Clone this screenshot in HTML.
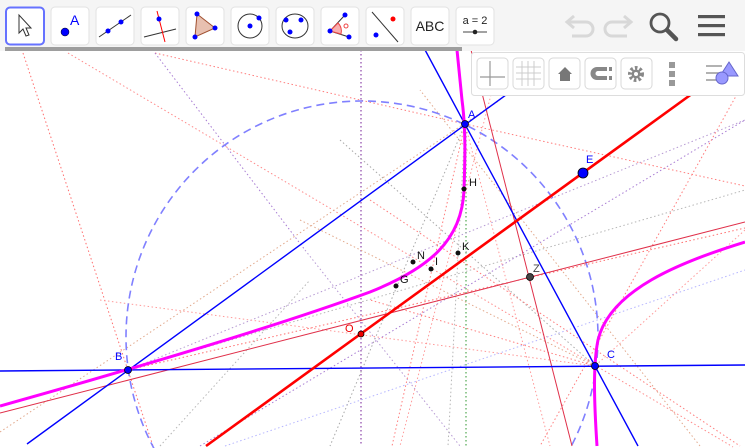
<!DOCTYPE html>
<html><head><meta charset="utf-8"><style>
html,body{margin:0;padding:0;width:745px;height:448px;overflow:hidden;background:#fff;font-family:"Liberation Sans",sans-serif}
#w{width:745px;height:448px;overflow:hidden;position:relative}
svg{display:block;position:absolute;left:0;top:0}
</style></head><body><div id="w">
<svg width="745" height="448" viewBox="0 0 745 448" overflow="hidden" xmlns="http://www.w3.org/2000/svg" font-family="Liberation Sans, sans-serif">
<rect width="745" height="448" fill="#fff"/>
<g fill="none" stroke-width="1" stroke-dasharray="1.5,2.5" opacity="0.85">
<line x1="23" y1="53" x2="153" y2="446" stroke="#f55"/>
<line x1="68" y1="53" x2="733" y2="447" stroke="#f77"/>
<line x1="155" y1="53" x2="465" y2="124" stroke="#f66"/>
<line x1="465" y1="124" x2="745" y2="186" stroke="#f66"/>
<line x1="155" y1="53" x2="305" y2="250" stroke="#96c"/>
<line x1="305" y1="250" x2="460" y2="446" stroke="#a8c"/>
<line x1="361" y1="50" x2="361" y2="446" stroke="#729" stroke-width="1.2"/>
<line x1="466" y1="124" x2="466" y2="446" stroke="#393" stroke-width="1.2"/>
<line x1="0" y1="432" x2="500" y2="100" stroke="#d97"/>
<line x1="128" y1="370" x2="745" y2="228" stroke="#f55"/>
<line x1="128" y1="370" x2="745" y2="120" stroke="#a8c"/>
<line x1="128" y1="370" x2="745" y2="190" stroke="#aaa"/>
<line x1="100" y1="300" x2="595" y2="366" stroke="#f88"/>
<line x1="200" y1="446" x2="745" y2="120" stroke="#96c"/>
<line x1="225" y1="446" x2="745" y2="270" stroke="#aaf"/>
<line x1="465" y1="124" x2="392" y2="446" stroke="#f66"/>
<line x1="465" y1="124" x2="448" y2="446" stroke="#aaa"/>
<line x1="465" y1="124" x2="330" y2="446" stroke="#999"/>
<line x1="465" y1="124" x2="550" y2="446" stroke="#f88"/>
<line x1="340" y1="140" x2="595" y2="366" stroke="#999"/>
<line x1="370" y1="200" x2="740" y2="446" stroke="#f66"/>
<line x1="300" y1="220" x2="595" y2="366" stroke="#d97"/>
<line x1="745" y1="80" x2="540" y2="446" stroke="#f66"/>
<line x1="700" y1="446" x2="420" y2="90" stroke="#d97"/>
<line x1="595" y1="366" x2="370" y2="300" stroke="#f66"/>
<line x1="160" y1="446" x2="310" y2="280" stroke="#aaa"/>
<line x1="500" y1="60" x2="400" y2="446" stroke="#f88"/>
<line x1="745" y1="230" x2="595" y2="366" stroke="#f88"/>
</g>
<circle cx="362" cy="337" r="236" fill="none" stroke="#8080ff" stroke-width="1.6" stroke-dasharray="8,5"/>
<line x1="0" y1="413" x2="745" y2="222" stroke="#e0304a" stroke-width="1"/>
<line x1="471" y1="50" x2="572" y2="446" stroke="#e0304a" stroke-width="1"/>
<g stroke="#0000ff" stroke-width="1.4">
<line x1="27" y1="444" x2="510" y2="92"/>
<line x1="424" y1="48" x2="638" y2="446"/>
<line x1="0" y1="371" x2="745" y2="365"/>
</g>
<line x1="206" y1="446" x2="700" y2="88" stroke="#f00" stroke-width="2.6"/>
<g fill="none" stroke="#ff00ff" stroke-width="3">
<path d="M0,406 Q250,336 370,292 C430,268 462,240 464,190 C465,160 466,130 462,100 L457,50"/>
<path d="M745,242 C680,262 610,290 598,340 C593,365 594,400 597,446"/>
</g>
<g stroke="#000" stroke-width="0.8">
<circle cx="465" cy="124" r="3.5" fill="#00f"/>
<circle cx="128" cy="370" r="3.5" fill="#00f"/>
<circle cx="595" cy="366" r="3.5" fill="#00f"/>
<circle cx="583" cy="173" r="5" fill="#00f"/>
<circle cx="361" cy="334" r="3" fill="#e00"/>
<circle cx="530" cy="277" r="3.5" fill="#444"/>
</g>
<g fill="#111">
<circle cx="464" cy="189" r="2.5"/><circle cx="458" cy="253" r="2.5"/>
<circle cx="413" cy="262" r="2.5"/><circle cx="431" cy="269" r="2.5"/>
<circle cx="396" cy="286" r="2.5"/>
</g>
<g font-size="11">
<text x="468" y="118" fill="#00f">A</text>
<text x="115" y="360" fill="#00f">B</text>
<text x="607" y="358" fill="#00f">C</text>
<text x="586" y="163" fill="#00f">E</text>
<text x="469" y="186" fill="#111">H</text>
<text x="462" y="250" fill="#111">K</text>
<text x="417" y="259" fill="#111">N</text>
<text x="435" y="265" fill="#111">I</text>
<text x="400" y="283" fill="#111">G</text>
<text x="345" y="332" fill="#e00">O</text>
<text x="533" y="272" fill="#444">Z</text>
</g>
<rect x="0" y="0" width="745" height="51" fill="#f5f5f5"/>
<rect x="5" y="47" width="457" height="4" fill="#9e9e9e"/>
<g fill="#fff" stroke="#e2e2e2">
<rect x="51" y="7" width="38" height="38" rx="4"/><rect x="96" y="7" width="38" height="38" rx="4"/>
<rect x="141" y="7" width="38" height="38" rx="4"/><rect x="186" y="7" width="38" height="38" rx="4"/>
<rect x="231" y="7" width="38" height="38" rx="4"/><rect x="276" y="7" width="38" height="38" rx="4"/>
<rect x="321" y="7" width="38" height="38" rx="4"/><rect x="366" y="7" width="38" height="38" rx="4"/>
<rect x="411" y="7" width="38" height="38" rx="4"/><rect x="456" y="7" width="38" height="38" rx="4"/>
</g>
<rect x="6" y="7.5" width="38" height="37" rx="4" fill="#fff" stroke="#6672ff" stroke-width="2"/>
<path d="M19,15 L19,33 L23,29 L26,36 L29,35 L26,28 L31,28 Z" fill="#fff" stroke="#333" stroke-width="1"/>
<circle cx="65" cy="32" r="4" fill="#00f" stroke="#000" stroke-width=".5"/>
<text x="70" y="25" font-size="14" fill="#00f">A</text>
<line x1="99" y1="37" x2="131" y2="15" stroke="#333"/><circle cx="108" cy="31" r="2.5" fill="#00f"/><circle cx="121" cy="22" r="2.5" fill="#00f"/>
<line x1="144" y1="37" x2="176" y2="29" stroke="#333"/><line x1="157" y1="11" x2="165" y2="42" stroke="#f00"/><circle cx="159" cy="19" r="2.5" fill="#00f"/>
<path d="M197,14 L215,28 L195,37 Z" fill="#e8c0b0" stroke="#a05030"/><circle cx="197" cy="14" r="2.5" fill="#00f"/><circle cx="215" cy="28" r="2.5" fill="#00f"/><circle cx="195" cy="37" r="2.5" fill="#00f"/>
<circle cx="250" cy="26" r="12" fill="none" stroke="#333"/><circle cx="250" cy="26" r="2.5" fill="#00f"/><circle cx="259" cy="18" r="2.5" fill="#00f"/>
<ellipse cx="295" cy="26" rx="13" ry="12" fill="none" stroke="#333"/><circle cx="286" cy="20" r="2.5" fill="#00f"/><circle cx="301" cy="20" r="2.5" fill="#00f"/><circle cx="290" cy="32" r="2.5" fill="#00f"/>
<path d="M330,31 L345,15 M330,31 L349,37" stroke="#333" fill="none"/><path d="M330,31 L338,23 A11,11 0 0 1 341,34 Z" fill="#f8b0b0" stroke="#e44"/><circle cx="346" cy="26" r="2" fill="none" stroke="#e44"/>
<circle cx="330" cy="31" r="2.5" fill="#00f"/><circle cx="345" cy="15" r="2.5" fill="#00f"/><circle cx="349" cy="37" r="2.5" fill="#00f"/>
<line x1="372" y1="12" x2="398" y2="42" stroke="#333"/><circle cx="393" cy="19" r="2.5" fill="#f00"/><circle cx="376" cy="35" r="2.5" fill="#00f"/>
<text x="430" y="31" font-size="14" text-anchor="middle" fill="#222">ABC</text>
<text x="475" y="24" font-size="11" text-anchor="middle" fill="#222">a = 2</text>
<line x1="463" y1="32" x2="487" y2="32" stroke="#444"/><circle cx="475" cy="32" r="2.3" fill="#222"/>
<g fill="none" stroke="#d8d8d8" stroke-width="3">
<path d="M568,22 L586,22 A7,7 0 0 1 586,36 L572,36"/><path d="M574,16 L567,22 L574,28" />
<path d="M630,22 L612,22 A7,7 0 0 0 612,36 L627,36"/><path d="M624,16 L631,22 L624,28"/>
</g>
<circle cx="660" cy="23" r="9" fill="none" stroke="#555" stroke-width="2.8"/>
<line x1="667" y1="30" x2="676" y2="39" stroke="#555" stroke-width="4.5" stroke-linecap="round"/>
<g fill="#555"><rect x="698" y="15" width="27" height="3.2"/><rect x="698" y="24" width="27" height="3.2"/><rect x="698" y="33" width="27" height="3.2"/></g>
<rect x="471.5" y="52.5" width="273" height="43" rx="3" fill="#fff" stroke="#ddd"/>
<g fill="#fff" stroke="#d8d8d8">
<rect x="477" y="58" width="31" height="31" rx="4"/><rect x="513" y="58" width="31" height="31" rx="4"/>
<rect x="549" y="58" width="31" height="31" rx="4"/><rect x="585" y="58" width="31" height="31" rx="4"/>
<rect x="621" y="58" width="31" height="31" rx="4"/>
</g>
<g stroke="#999" stroke-width="1.2"><line x1="480" y1="77" x2="505" y2="77"/><line x1="490" y1="61" x2="490" y2="86"/></g>
<g stroke="#ccc" stroke-width="1"><line x1="516" y1="67" x2="541" y2="67"/><line x1="516" y1="73" x2="541" y2="73"/><line x1="516" y1="79" x2="541" y2="79"/><line x1="522" y1="61" x2="522" y2="86"/><line x1="528" y1="61" x2="528" y2="86"/><line x1="534" y1="61" x2="534" y2="86"/></g>
<path d="M558,74 L565,67 L572,74 L570,74 L570,81 L560,81 L560,74 Z" fill="#777"/>
<path d="M607,67 L597,67 A6,6 0 0 0 597,80 L607,80 L607,76 L598,76 A2.5,2.5 0 0 1 598,71 L607,71 Z" fill="#888"/><rect x="609" y="67" width="3" height="4" fill="#888"/><rect x="609" y="76" width="3" height="4" fill="#888"/>
<circle cx="636" cy="74" r="6" fill="none" stroke="#888" stroke-width="4" stroke-dasharray="2.5,2"/><circle cx="636" cy="74" r="4.5" fill="#888"/><circle cx="636" cy="74" r="2" fill="#fff"/>
<g fill="#999"><rect x="669" y="62" width="6" height="6"/><rect x="669" y="71" width="6" height="6"/><rect x="669" y="80" width="6" height="6"/></g>
<g stroke="#999" stroke-width="1.5"><line x1="706" y1="66" x2="722" y2="66"/><line x1="706" y1="73" x2="720" y2="73"/><line x1="706" y1="80" x2="716" y2="80"/></g>
<path d="M729,62 L738,76 L720,76 Z" fill="#99f" stroke="#66c"/><circle cx="722" cy="78" r="6" fill="#99f" stroke="#66c"/>
</svg>
</div></body></html>
